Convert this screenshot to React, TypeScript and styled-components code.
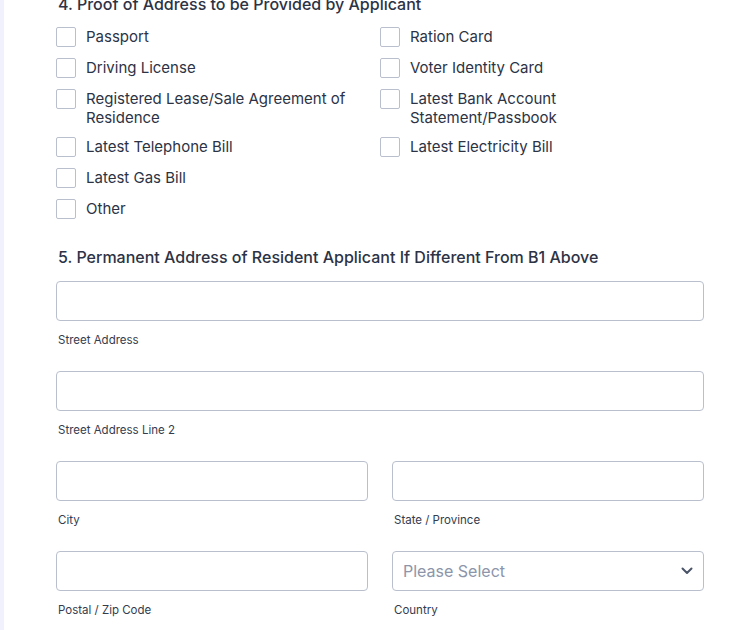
import React from "react";
import styled, { createGlobalStyle } from "styled-components";

const Global = createGlobalStyle`
  html, body { margin: 0; padding: 0; background: #ffffff; }
  body { font-family: Inter, "Noto Sans", sans-serif; color: #2c3345; overflow: hidden; }
  * { box-sizing: border-box; }
`;

const Page = styled.div`
  display: flex;
  min-height: 630px;
  height: 630px;
  overflow: hidden;
`;

const Strip = styled.div`
  width: 4px;
  flex: 0 0 4px;
  background: #f1f1fd;
`;

const Content = styled.div`
  padding-left: 52px;
  width: 700px;
  display: flex;
  flex-direction: column;
`;

const Heading = styled.h2<{ $top: number }>`
  margin: ${(p) => p.$top}px 0 0 2px;
  font-size: 16px;
  line-height: 20px;
  font-weight: 500;
  color: #2c3345;
`;

const Columns = styled.div`
  display: grid;
  grid-template-columns: 324px 324px;
  margin-top: 13px;
`;

const Column = styled.div`
  display: flex;
  flex-direction: column;
  gap: 11px;
`;

const Option = styled.label`
  display: flex;
  align-items: flex-start;
  gap: 10px;
`;

const Box = styled.span`
  width: 20px;
  height: 20px;
  flex: 0 0 20px;
  border: 1px solid #b9bfcc;
  border-radius: 2px;
  background: #fff;
`;

const OptionText = styled.span`
  font-size: 15px;
  line-height: 19px;
  margin-bottom: -1px;
  max-width: 280px;
  color: #2c3345;
`;

const Fields = styled.div`
  display: grid;
  grid-template-columns: 312px 312px;
  column-gap: 24px;
  row-gap: 24px;
  margin-top: 14px;
`;

const Field = styled.div<{ $full?: boolean }>`
  grid-column: ${(p) => (p.$full ? "1 / -1" : "auto")};
  display: flex;
  flex-direction: column;
`;

const Input = styled.div`
  height: 40px;
  border: 1px solid #b9bfcc;
  border-radius: 4px;
  background: #fff;
`;

const Select = styled(Input)`
  display: flex;
  align-items: center;
  justify-content: space-between;
  padding: 0 10px 0 10px;
  font-size: 16px;
  color: #8c95a9;
`;

const SubLabel = styled.span`
  margin-top: 12px;
  margin-left: 2px;
  font-size: 11.5px;
  line-height: 14px;
  color: #343c4e;
`;

const Chevron = () => (
  <svg width="12" height="8" viewBox="0 0 12 8" fill="none">
    <path d="M1.5 1.5 L6 6 L10.5 1.5" stroke="#4a5468" strokeWidth="2" strokeLinecap="round" strokeLinejoin="round" />
  </svg>
);

const left = [
  "Passport",
  "Driving License",
  "Registered Lease/Sale Agreement of Residence",
  "Latest Telephone Bill",
  "Latest Gas Bill",
  "Other",
];
const right = [
  "Ration Card",
  "Voter Identity Card",
  "Latest Bank Account Statement/Passbook",
  "Latest Electricity Bill",
];

export default function App() {
  return (
    <>
      <Global />
      <Page>
        <Strip />
        <Content>
          <Heading $top={-6}>4. Proof of Address to be Provided by Applicant</Heading>
          <Columns>
            <Column>
              {left.map((t) => (
                <Option key={t}>
                  <Box />
                  <OptionText>{t}</OptionText>
                </Option>
              ))}
            </Column>
            <Column>
              {right.map((t) => (
                <Option key={t}>
                  <Box />
                  <OptionText>{t}</OptionText>
                </Option>
              ))}
            </Column>
          </Columns>
          <Heading $top={28}>5. Permanent Address of Resident Applicant If Different From B1 Above</Heading>
          <Fields>
            <Field $full>
              <Input />
              <SubLabel>Street Address</SubLabel>
            </Field>
            <Field $full>
              <Input />
              <SubLabel>Street Address Line 2</SubLabel>
            </Field>
            <Field>
              <Input />
              <SubLabel>City</SubLabel>
            </Field>
            <Field>
              <Input />
              <SubLabel>State / Province</SubLabel>
            </Field>
            <Field>
              <Input />
              <SubLabel>Postal / Zip Code</SubLabel>
            </Field>
            <Field>
              <Select>
                <span>Please Select</span>
                <Chevron />
              </Select>
              <SubLabel>Country</SubLabel>
            </Field>
          </Fields>
        </Content>
      </Page>
    </>
  );
}
